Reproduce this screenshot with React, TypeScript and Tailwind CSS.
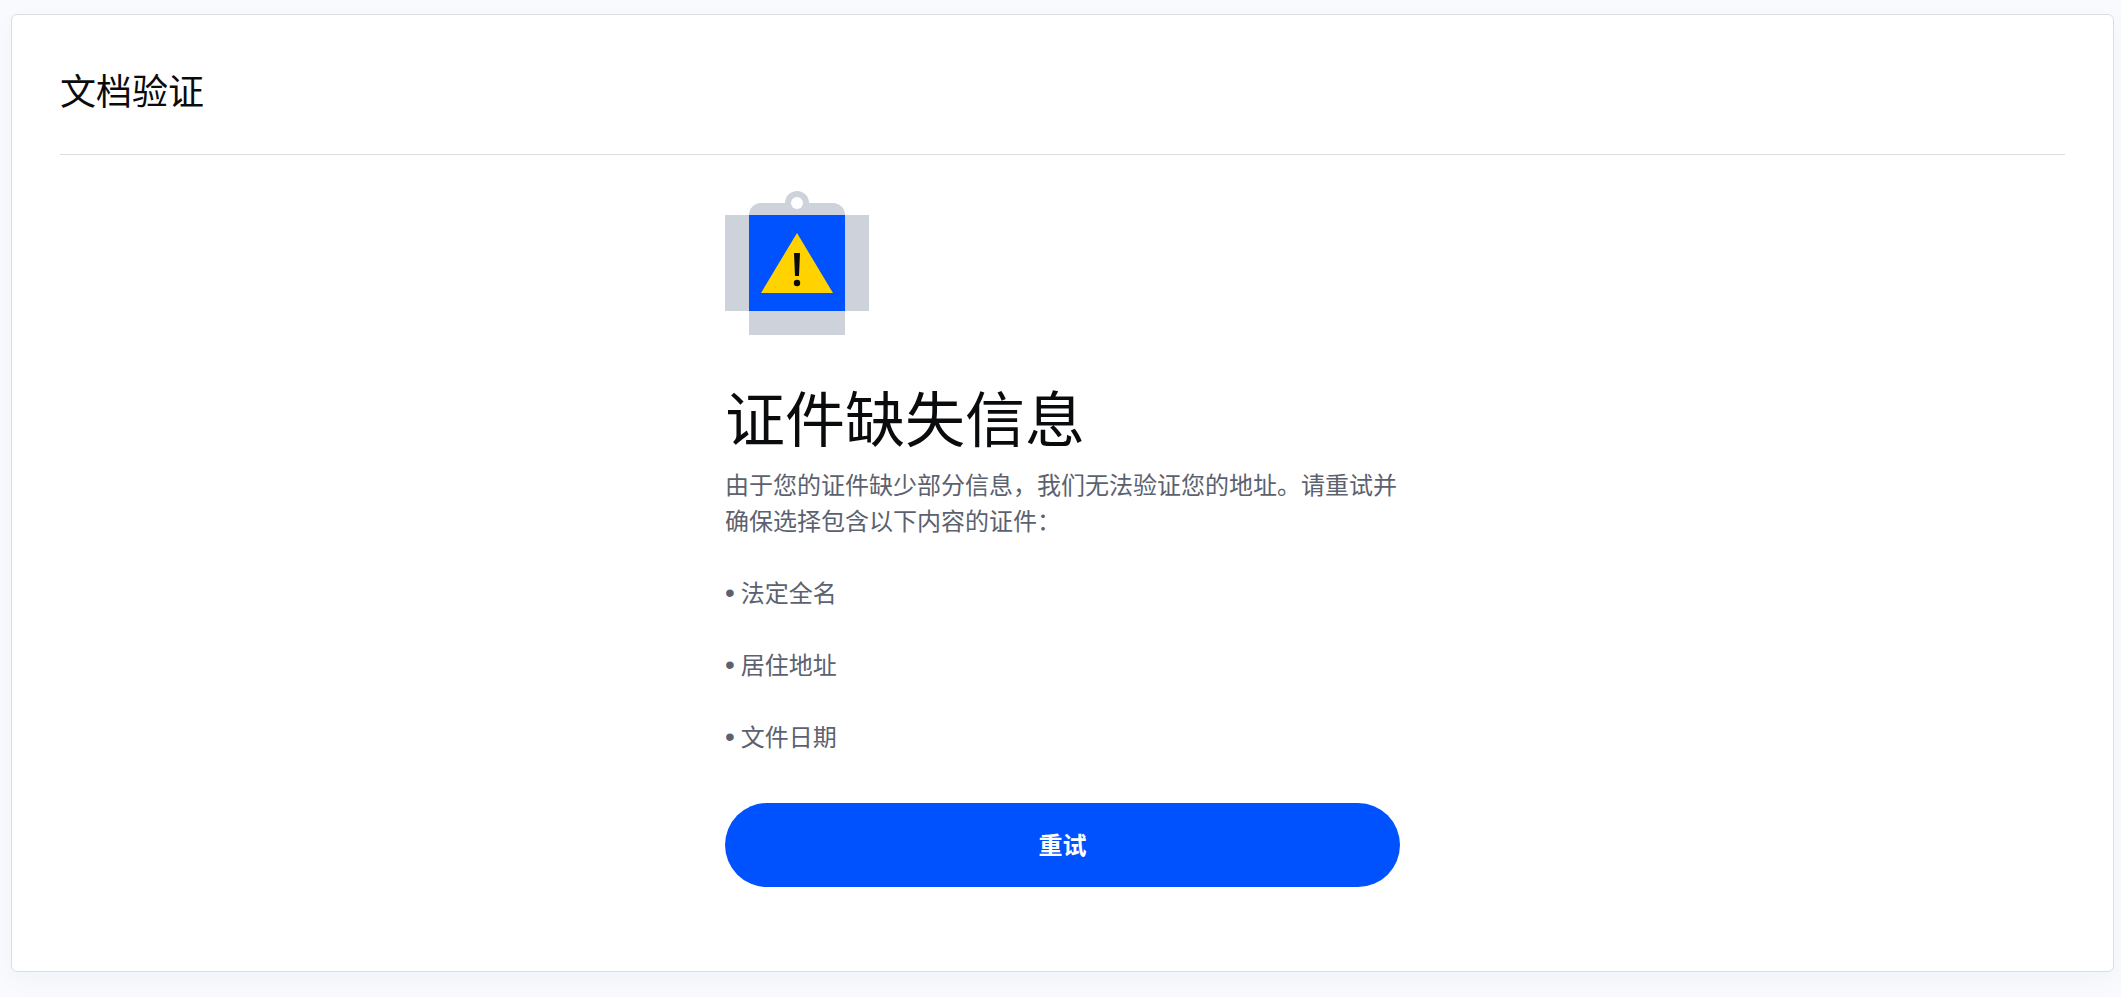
const requirements = ['法定全名', '居住地址', '文件日期'];

function MissingInfoIcon() {
  return (
    <svg className="block size-36" viewBox="0 0 144 144" aria-hidden="true">
      <path d="M0 24h144v96H0z" fill="#ced2db" />
      <path d="M24 24a12 12 0 0 1 12-12h72a12 12 0 0 1 12 12v120H24z" fill="#ced2db" />
      <circle cx="72" cy="12" r="12" fill="#ced2db" />
      <circle cx="72" cy="12" r="6" fill="#ffffff" />
      <path d="M24 24h96v96H24z" fill="#0052ff" />
      <path d="M72 42l36 60H36z" fill="#ffd200" />
      <path d="M69 62h6l-1 23h-4z" fill="#0a0b0d" />
      <circle cx="72" cy="92" r="3.2" fill="#0a0b0d" />
    </svg>
  );
}

export default function App() {
  return (
    <div className="min-h-screen bg-[#f8fafd] pt-3.5 pr-[7px] pb-6 pl-[11px] font-['Noto_Sans','Noto_Sans_CJK_SC',sans-serif] text-[#0a0b0d]">
      <main className="rounded-md border border-[#dcdde1] bg-white px-12 pb-[84px] shadow-[0_8px_24px_rgba(17,51,83,0.03)]">
        <header className="border-b border-[#dcdde1] pt-[50px] pb-[35px]">
          <h1 className="text-4xl leading-[54px] font-normal">文档验证</h1>
        </header>
        <section className="mx-auto flex max-w-[675px] flex-col pt-9">
          <MissingInfoIcon />
          <h2 className="mt-12 text-6xl leading-[72px] font-normal">证件缺失信息</h2>
          <div className="mt-3 text-2xl leading-9 text-[#5b616e]">
            <p>由于您的证件缺少部分信息，我们无法验证您的地址。请重试并确保选择包含以下内容的证件：</p>
            <ul className="mt-9 flex flex-col gap-9">
              {requirements.map((item) => (
                <li key={item} className="flex items-center gap-1.5">
                  <span className="font-['Liberation_Sans',sans-serif] text-[28px] leading-9">•</span>
                  {item}
                </li>
              ))}
            </ul>
          </div>
          <button
            type="button"
            className="mt-12 h-[84px] w-full cursor-pointer rounded-full bg-[#0052ff] text-2xl font-bold text-white"
          >
            重试
          </button>
        </section>
      </main>
    </div>
  );
}
